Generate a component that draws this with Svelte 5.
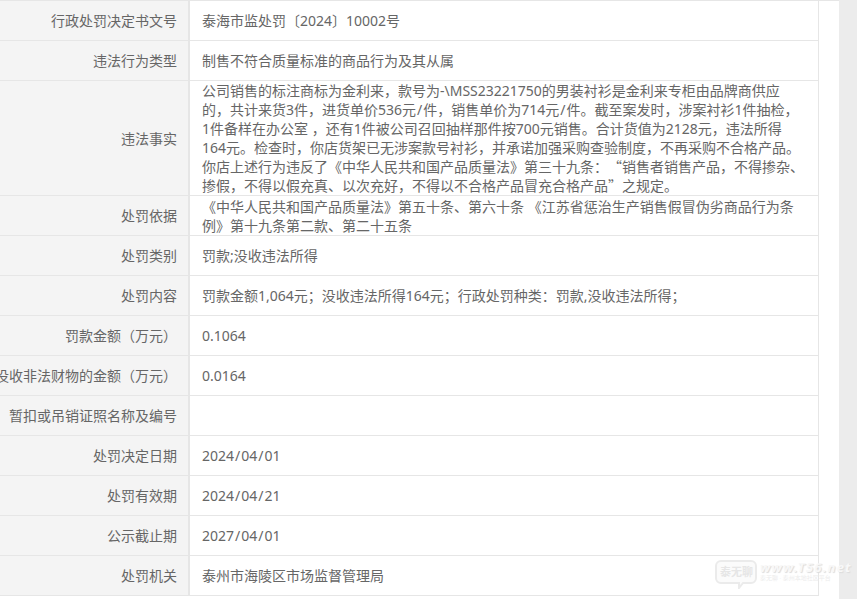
<script>
  const rows = [
    { k: '行政处罚决定书文号', v: '泰海市监处罚〔2024〕10002号' },
    { k: '违法行为类型', v: '制售不符合质量标准的商品行为及其从属' },
    { k: '违法事实', v: '公司销售的标注商标为金利来，款号为-\\MSS23221750的男装衬衫是金利来专柜由品牌商供应\n的，共计来货3件，进货单价536元/件，销售单价为714元/件。截至案发时，涉案衬衫1件抽检，\n1件备样在办公室 ，还有1件被公司召回抽样那件按700元销售。合计货值为2128元，违法所得\n164元。检查时，你店货架已无涉案款号衬衫，并承诺加强采购查验制度，不再采购不合格产品。\n你店上述行为违反了《中华人民共和国产品质量法》第三十九条：“销售者销售产品，不得掺杂、\n掺假，不得以假充真、以次充好，不得以不合格产品冒充合格产品”之规定。' },
    { k: '处罚依据', v: '《中华人民共和国产品质量法》第五十条、第六十条 《江苏省惩治生产销售假冒伪劣商品行为条\n例》第十九条第二款、第二十五条' },
    { k: '处罚类别', v: '罚款;没收违法所得' },
    { k: '处罚内容', v: '罚款金额1,064元；没收违法所得164元；行政处罚种类：罚款,没收违法所得；' },
    { k: '罚款金额（万元）', v: '0.1064' },
    { k: '没收非法财物的金额（万元）', v: '0.0164' },
    { k: '暂扣或吊销证照名称及编号', v: '' },
    { k: '处罚决定日期', v: '2024/04/01' },
    { k: '处罚有效期', v: '2024/04/21' },
    { k: '公示截止期', v: '2027/04/01' },
    { k: '处罚机关', v: '泰州市海陵区市场监督管理局' }
  ];
  const parts = (s) => s.split(/([“”/])/);
  const kind = (p) => (p === '/' ? 'sl' : p === '“' || p === '”' ? 'qt' : '');
</script>

<div class="page">
  <div class="sheet">
    {#each rows as r}
      <div class="row">
        <div class="key"><span>{r.k}</span></div>
        <div class="val"><div class="txt">{#each parts(r.v) as p}{#if kind(p)}<span class={kind(p)}>{p}</span>{:else}{p}{/if}{/each}</div></div>
      </div>
    {/each}
  </div>
  <div class="mark">
    <svg width="45" height="30" viewBox="0 0 45 30" aria-hidden="true">
      <path d="M7 2h30a5 5 0 0 1 5 5v12a5 5 0 0 1-5 5H29l-4 5v-5H7a5 5 0 0 1-5-5V7a5 5 0 0 1 5-5z" fill="#fbfbfb" stroke="#ebebeb" stroke-width="2"/>
    </svg>
    <span class="badge">泰无聊</span>
    <div class="marktext">
      <span class="url">www.T56.net</span>
      <span class="tag">泰无聊 · 泰州本地社区平台</span>
    </div>
  </div>
</div>

<style>
  :global(body) {
    margin: 0;
    background: #ececec;
  }
  .page {
    height: 599px;
    width: 857px;
    overflow: hidden;
    position: relative;
    background: #ececec;
    font-family: "Noto Sans", "Noto Sans CJK SC", sans-serif;
    font-size: 14px;
    line-height: 19px;
    color: #666;
  }
  .sheet {
    width: 839px;
    height: 599px;
    background: #fff;
    box-sizing: border-box;
    border-top: 1px solid #e6e6e6;
  }
  .row {
    display: grid;
    grid-template-columns: 190px 628px;
    min-height: 39px;
    width: 818px;
    border-bottom: 1px solid #e6e6e6;
    border-right: 1px solid #e6e6e6;
  }
  .key {
    background: #f4f4f4;
    border-right: 2px solid #e6e6e6;
    display: flex;
    align-items: center;
    justify-content: flex-end;
    white-space: nowrap;
    padding-right: 11px;
    min-width: 0;
    overflow: hidden;
    box-sizing: border-box;
  }
  .key span {
    flex-shrink: 0;
  }
  .val {
    padding: 0 4px 0 12px;
    display: flex;
    align-items: center;
    box-sizing: border-box;
    text-spacing-trim: space-all;
  }
  .txt {
    white-space: pre-line;
  }
  .sl {
    padding: 0 1px;
  }
  .qt {
    font-family: "Noto Sans CJK SC", sans-serif;
  }
  .mark {
    position: absolute;
    left: 714px;
    top: 559px;
    width: 143px;
    height: 32px;
    display: flex;
  }
  .mark svg {
    flex: none;
  }
  .badge {
    position: absolute;
    left: 6px;
    top: 6px;
    font-size: 11px;
    line-height: 14px;
    color: #e6e6e6;
    font-weight: 700;
  }
  .marktext {
    display: flex;
    flex-direction: column;
    margin-left: 1px;
  }
  .url {
    font-size: 13px;
    line-height: 16px;
    font-style: italic;
    font-weight: 700;
    color: #f8f8f8;
    text-shadow: 1px 1px 1px #dcdcdc;
    letter-spacing: 1.2px;
    white-space: nowrap;
  }
  .tag {
    font-size: 6px;
    line-height: 7px;
    color: #ececec;
    white-space: nowrap;
  }
</style>
